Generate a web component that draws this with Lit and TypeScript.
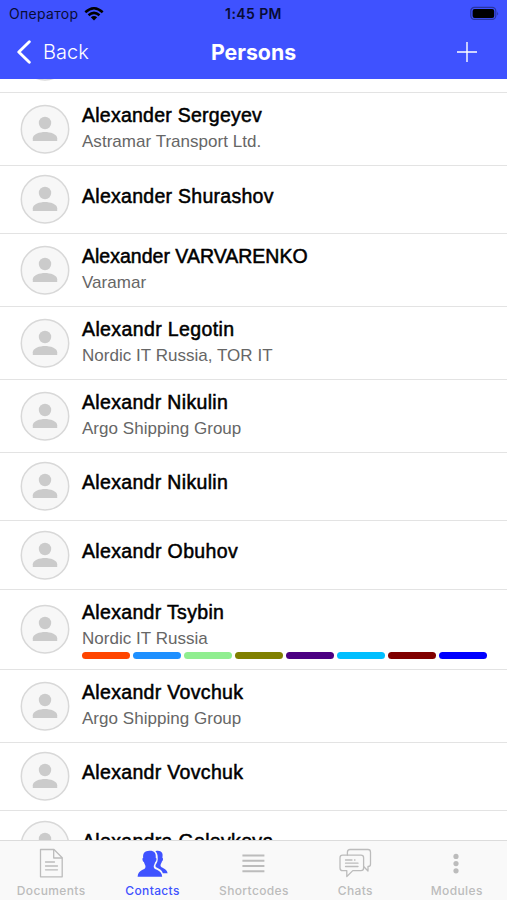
import { LitElement, html, css, svg, nothing } from "lit";
import { customElement, property } from "lit/decorators.js";
import { classMap } from "lit/directives/class-map.js";

interface Person {
  name: string;
  company?: string;
  tags?: string[];
  tracking?: number;
}

const PERSONS: Person[] = [
  { name: "Alexander Sergeyev", company: "Astramar Transport Ltd." },
  { name: "Alexander Shurashov", tracking: 0.28 },
  { name: "Alexander VARVARENKO", company: "Varamar", tracking: 0.01 },
  { name: "Alexandr Legotin", company: "Nordic IT Russia, TOR IT", tracking: 0.38 },
  { name: "Alexandr Nikulin", company: "Argo Shipping Group", tracking: 0.33 },
  { name: "Alexandr Nikulin", tracking: 0.33 },
  { name: "Alexandr Obuhov", tracking: 0.36 },
  {
    name: "Alexandr Tsybin",
    company: "Nordic IT Russia",
    tags: ["#ff4500", "#1e90ff", "#90ee90", "#808000", "#4b0082", "#00bfff", "#800000", "#0000ff"],
    tracking: 0.33,
  },
  { name: "Alexandr Vovchuk", company: "Argo Shipping Group", tracking: 0.33 },
  { name: "Alexandr Vovchuk", tracking: 0.33 },
  { name: "Alexandra Golovkova", tracking: 0.33 },
];

const ICONS = {
  documents: svg`<g fill="none" stroke="currentColor" stroke-width="1.3" stroke-linejoin="round">
    <path d="M7.5 1.5H21L29.2 9.7V28.8H7.5Z"/><path d="M20.7 1.5V10H29.2"/>
    <path d="M12.5 14H21.5M12.5 18H24.5M12.5 21.8H24.5" stroke-linecap="round"/></g>`,
  contacts: svg`<g fill="currentColor">
    <path d="M21.4 3.3C24 2.3 27 3 28 4.8C29 6.4 28.5 8.4 28.4 9.8C29.6 10.2 29 12.8 27.9 13.5C27.5 15.2 26.5 16 26.5 17.6C26.6 20.6 33 20 33.6 25.3H28.9C27.8 22 25 20.8 22.6 19.6C21.2 18.9 21.3 17.6 21.8 16.6C23.2 14.9 24 12.3 23.7 9.6C23.8 6.9 23 4.8 21.4 3.3Z"/>
    <path d="M15.3 2.7C20 2.4 22.3 5 21.7 9.8C23.2 10.4 22.4 13.4 21.2 14.1C20.8 16.1 19.7 17.1 19.7 18.8C19.8 22.7 27.8 21.2 28.2 28.7H3.6C4 21.2 11.5 22.7 11.5 18.8C11.5 17.1 10.3 16.1 9.9 14.1C8.6 13.4 7.8 10.4 9.2 9.8C8.6 5 11 2.9 15.3 2.7Z"/></g>`,
  shortcodes: svg`<path d="M7.4 7.5H29.4M7.4 12.8H29.4M7.4 18H29.4M7.4 23.2H29.4" fill="none" stroke="currentColor" stroke-width="2"/>`,
  chats: svg`<g fill="none" stroke="currentColor" stroke-width="1.3" stroke-linejoin="round" stroke-linecap="round">
    <path d="M10.4 7.2V4.2Q10.4 1.5 13 1.5H31Q33.5 1.5 33.5 4.2V16.2Q33.5 18.5 31 18.5V23L26.6 18.5"/>
    <path d="M5.6 7.2H24Q26.6 7.2 26.6 9.8V20Q26.6 22.6 24 22.6H15.8L9.8 28.5V22.6H5.6Q3 22.6 3 20V9.8Q3 7.2 5.6 7.2Z"/>
    <path d="M8.5 12H15M17.5 12H18M8.5 15.2H21M8.5 18.5H21"/></g>`,
  modules: svg`<g fill="currentColor"><circle cx="18" cy="8.4" r="2.6"/><circle cx="18" cy="15.6" r="2.6"/><circle cx="18" cy="22.8" r="2.6"/></g>`,
};

const TABS: { id: keyof typeof ICONS; label: string }[] = [
  { id: "documents", label: "Documents" },
  { id: "contacts", label: "Contacts" },
  { id: "shortcodes", label: "Shortcodes" },
  { id: "chats", label: "Chats" },
  { id: "modules", label: "Modules" },
];

@customElement("person-row")
class PersonRow extends LitElement {
  @property({ attribute: false }) person?: Person;

  static styles = css`
    :host { display: block; }
    .row {
      box-sizing: border-box;
      display: flex;
      height: 72.8px;
      padding: 0 20px;
      gap: 12px;
      border-bottom: 1px solid #e3e3e3;
    }
    .single { height: 68.5px; }
    .tagged { height: 80.3px; }
    .avatar { width: 50px; height: 50px; flex: none; align-self: center; }
    .text { flex: 1; padding-top: 10.2px; white-space: nowrap; }
    .single .text { padding-top: 17.8px; }
    .name {
      font-size: 19.5px;
      line-height: 24px;
      color: #000;
      -webkit-text-stroke: 0.5px #000;
    }
    .company { margin-top: 2.7px; font-size: 17px; line-height: 24px; letter-spacing: 0.03px; color: #666; }
    .tagged .company { margin-top: 3.2px; }
    .tags { display: flex; gap: 3px; margin-top: 1.5px; }
    .tag { flex: 1; height: 7px; border-radius: 3.5px; }
  `;

  render() {
    const p = this.person;
    return html`
      <div class=${classMap({ row: true, single: !!p && !p.company, tagged: !!p?.tags })}>
        <svg class="avatar" viewBox="0 0 50 50">
          <circle cx="25" cy="25.2" r="23.7" fill="#f7f7f7" stroke="#d8d8d8" stroke-width="1.5" />
          <circle cx="25" cy="19" r="6.2" fill="#cbcbcb" />
          <path d="M12.8 37V34.2C12.8 30 20 28 25 28S37.2 30 37.2 34.2V37Z" fill="#cbcbcb" />
        </svg>
        ${p
          ? html`<div class="text">
              <div class="name" style="letter-spacing:${p.tracking ?? 0.25}px">${p.name}</div>
              ${p.company ? html`<div class="company">${p.company}</div>` : nothing}
              ${p.tags
                ? html`<div class="tags">${p.tags.map((c) => html`<div class="tag" style="background:${c}"></div>`)}</div>`
                : nothing}
            </div>`
          : nothing}
      </div>
    `;
  }
}

@customElement("app-root")
class AppRoot extends LitElement {
  static styles = css`
    :host {
      display: flex;
      flex-direction: column;
      height: 900px;
      overflow: hidden;
      background: #fff;
      font-family: "Liberation Sans", Arial, sans-serif;
    }
    .header { height: 79px; flex: none; background: #3f52ff; font-family: Inter, sans-serif; }
    .status, .nav { display: grid; grid-template-columns: 1fr auto 1fr; align-items: center; }
    .status { height: 27px; padding: 0 8px; color: #080c35; font-size: 14px; }
    .carrier { display: flex; align-items: center; gap: 5.5px; padding-left: 1px; }
    .operator { letter-spacing: 0.3px; }
    .time { font-weight: 600; letter-spacing: 0.4px; }
    .battery { justify-self: end; }
    .nav { height: 50px; padding: 0 29px; color: #fff; }
    .back { display: flex; align-items: center; gap: 11px; margin-left: -13px; font-size: 20px; font-weight: 300; }
    .title { font-size: 21.3px; font-weight: 700; }
    .add { justify-self: end; }
    .list { flex: 1; min-height: 0; overflow: hidden; }
    .rows { margin-top: -58.9px; }
    .tabs {
      box-sizing: border-box;
      height: 60px;
      flex: none;
      display: grid;
      grid-template-columns: repeat(5, 1fr);
      border-top: 1px solid #dcdcdc;
      background: #f9f9f9;
      font-family: Inter, sans-serif;
    }
    .tab {
      display: flex;
      flex-direction: column;
      align-items: center;
      padding-top: 7px;
      color: #bcbcbc;
      font-size: 12px;
      line-height: 15px;
      font-weight: 500;
      letter-spacing: 0.37px;
    }
    .tab svg { margin-bottom: 5.4px; }
    .tab span { padding-left: 0.9px; }
    .active { color: #3f52ff; }
  `;

  render() {
    return html`
      <header class="header">
        <div class="status">
          <div class="carrier">
            <span class="operator">Оператор</span>
            <svg width="20" height="14" viewBox="0 0 20 14">
              <g fill="none" stroke="#000" stroke-width="2.5">
                <path d="M1.3 5.2Q10-2.6 18.7 5.2" />
                <path d="M4.5 8.3Q10 3.4 15.5 8.3" />
              </g>
              <path d="M6.8 10.3Q10 7.8 13.2 10.3L10 13.6Z" />
            </svg>
          </div>
          <div class="time">1:45 PM</div>
          <svg class="battery" width="29" height="15" viewBox="0 0 29 15">
            <rect x="0.8" y="1.4" width="25" height="12" rx="3.6" fill="none" stroke="#2935a0" stroke-width="1.2" />
            <rect x="2.6" y="3.1" width="21.6" height="8.8" rx="2" />
            <path d="M27.2 5.4Q29 7.4 27.2 9.4Z" fill="#2935a0" />
          </svg>
        </div>
        <div class="nav">
          <div class="back">
            <svg width="16" height="24" viewBox="0 0 16 24">
              <path d="M13.3 1.8L2.8 12L13.3 22.2" fill="none" stroke="#fff" stroke-width="2.9" stroke-linecap="round" stroke-linejoin="round" />
            </svg>
            <span>Back</span>
          </div>
          <div class="title">Persons</div>
          <svg class="add" width="22" height="22" viewBox="0 0 22 22">
            <path d="M11 1V21M1 11H21" fill="none" stroke="#fff" stroke-width="1.4" />
          </svg>
        </div>
      </header>
      <main class="list">
        <div class="rows">
          <person-row></person-row>
          ${PERSONS.map((p) => html`<person-row .person=${p}></person-row>`)}
        </div>
      </main>
      <nav class="tabs">
        ${TABS.map(
          (t) => html`
            <div class=${classMap({ tab: true, active: t.id === "contacts" })}>
              <svg width="36" height="30" viewBox="0 0 36 30">${ICONS[t.id]}</svg>
              <span>${t.label}</span>
            </div>
          `
        )}
      </nav>
    `;
  }
}
